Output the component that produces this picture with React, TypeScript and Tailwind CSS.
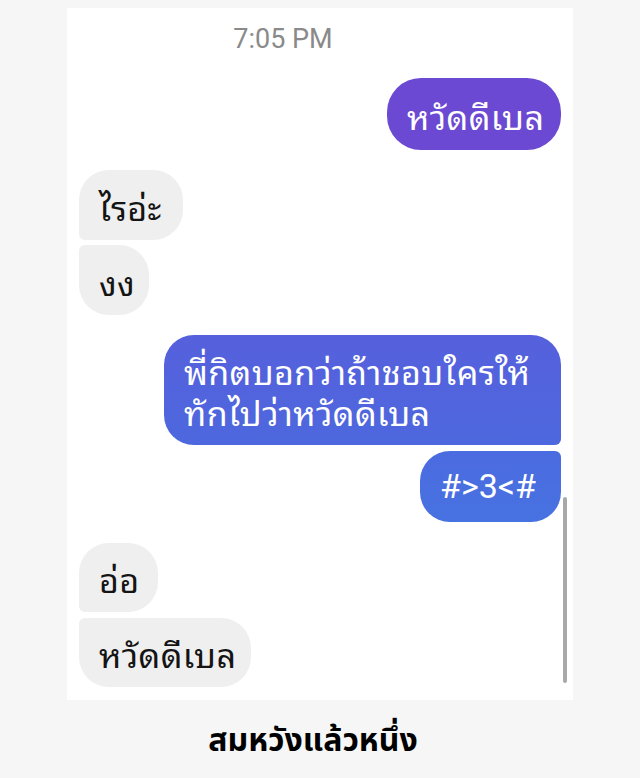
import React from 'react';

type Side = 'in' | 'out';

interface Msg {
  text: string[];
  side: Side;
  className: string;
}

const font = { fontFamily: '"Noto Sans Thai Looped", "Loma", "Garuda", "Noto Sans Thai", "Noto Sans", sans-serif' };
const captionFont = { fontFamily: '"Noto Sans Thai", "Noto Sans", sans-serif' };

function Bubble({ text, side, className }: Msg) {
  return (
    <div className={`flex ${side === 'out' ? 'justify-end' : 'justify-start'}`}>
      <div className={`pl-[20px] flex flex-col justify-center text-[34px] tracking-[0.4px] leading-[41px] whitespace-nowrap ${className}`} style={font}>
        {text.map((t, i) => (
          <span key={i}>{t}</span>
        ))}
      </div>
    </div>
  );
}

export default function App() {
  return (
    <div className="w-[640px] h-[778px] bg-[#f6f6f6] flex flex-col items-center pt-[8px]">
      {/* chat screenshot */}
      <div className="relative w-[506px] h-[692px] bg-white px-[12px] flex flex-col">
        <div className="h-[70px] flex items-start justify-center pt-[11px] pr-[74px] text-[27px] text-[#8a8a8a] font-['Roboto']">
          7:05 PM
        </div>

        <Bubble
          side="out"
          text={['หวัดดีเบล']}
          className="w-[174px] h-[72px] bg-[#6b49d2] text-white rounded-[34px]"
        />

        <div className="h-[20px]" />
        <Bubble
          side="in"
          text={['ไรอ่ะ']}
          className="w-[104px] h-[70px] bg-[#efefef] text-[#141414] rounded-tl-[30px] rounded-tr-[30px] rounded-br-[30px] rounded-bl-[6px]"
        />
        <div className="h-[5px]" />
        <Bubble
          side="in"
          text={['งง']}
          className="w-[70px] h-[70px] bg-[#efefef] text-[#141414] rounded-tl-[6px] rounded-tr-[30px] rounded-br-[30px] rounded-bl-[30px]"
        />

        <div className="h-[20px]" />
        <Bubble
          side="out"
          text={['พี่กิตบอกว่าถ้าชอบใครให้', 'ทักไปว่าหวัดดีเบล']}
          className="w-[397px] h-[110px] bg-gradient-to-b from-[#5660dc] to-[#4d68de] text-white rounded-tl-[30px] rounded-tr-[30px] rounded-bl-[30px] rounded-br-[6px]"
        />
        <div className="h-[6px]" />
        <Bubble
          side="out"
          text={['#>3<#']}
          className="w-[141px] h-[71px] bg-gradient-to-b from-[#4b6be0] to-[#4772e1] text-white rounded-tl-[30px] rounded-tr-[6px] rounded-br-[30px] rounded-bl-[30px] !font-['Roboto'] !tracking-normal"
        />

        <div className="h-[21px]" />
        <Bubble
          side="in"
          text={['อ่อ']}
          className="w-[79px] h-[69px] bg-[#efefef] text-[#141414] rounded-tl-[30px] rounded-tr-[30px] rounded-br-[30px] rounded-bl-[6px]"
        />
        <div className="h-[6px]" />
        <Bubble
          side="in"
          text={['หวัดดีเบล']}
          className="w-[172px] h-[69px] bg-[#efefef] text-[#141414] rounded-tl-[6px] rounded-tr-[30px] rounded-br-[30px] rounded-bl-[30px]"
        />

        {/* scrollbar */}
        <div className="absolute right-[6px] top-[489px] w-[4px] h-[186px] rounded-full bg-[#a9a9a9]" />
      </div>

      <div className="mt-[21px] pr-[14px] text-[32px] font-bold text-black leading-[40px]" style={captionFont}>
        สมหวังแล้วหนึ่ง
      </div>
    </div>
  );
}
